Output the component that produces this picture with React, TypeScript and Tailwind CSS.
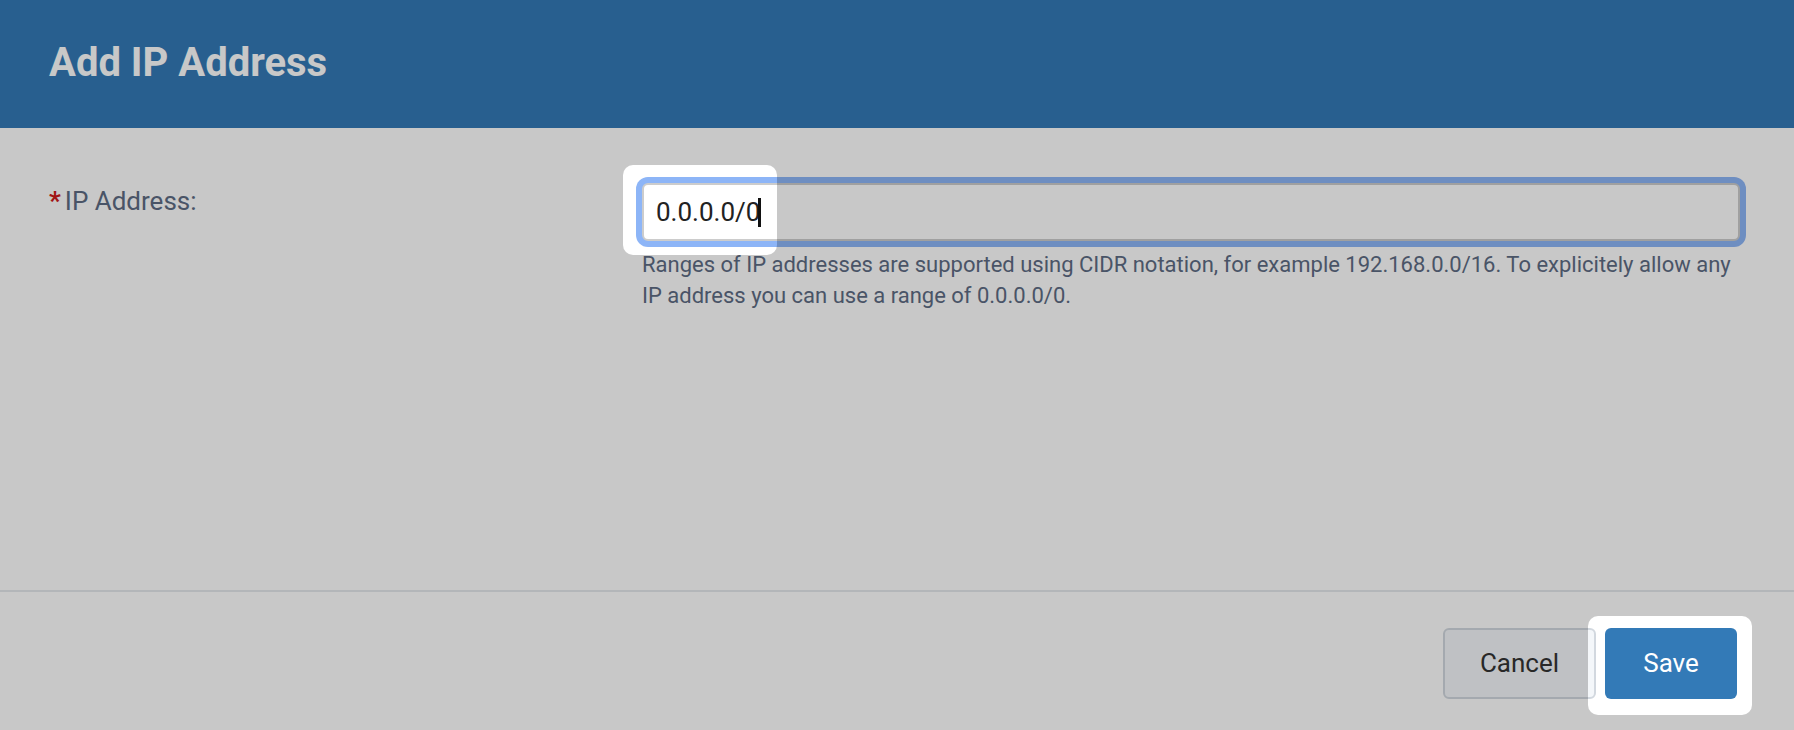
import React from "react";

export default function App() {
  return (
    <div className="relative w-[1794px] h-[730px] overflow-hidden bg-white font-['Roboto',sans-serif]">
      {/* Header */}
      <div className="h-[128px] bg-[#337ab7] pl-[49px] pt-[39px]">
        <h1 className="text-[40px] leading-[48px] font-bold text-white">Add IP Address</h1>
      </div>

      {/* Body */}
      <div className="h-[462px] flex pl-[49px] pt-[55px]">
        <div className="w-[593px] text-[26px] leading-[36px] text-[#5e6c84]">
          <span className="font-bold text-[#cf1c1c] mr-[4px]">*</span>IP Address:
        </div>
        <div className="w-[1098px]">
          <div className="h-[58px] border-2 border-[#cccccc] rounded-[6px] bg-white shadow-[0_0_0_6px_#8db5f7] flex items-center pl-[12px]">
            <span className="text-[26px] leading-[36px] text-[#222222]">0.0.0.0/0</span>
            <span className="inline-block w-[3px] h-[29px] bg-[#111111] -ml-[2px]" />
          </div>
          <p className="mt-[8px] text-[22px] leading-[31px] text-[#5e6c84] whitespace-nowrap">
            Ranges of IP addresses are supported using CIDR notation, for example 192.168.0.0/16. To explicitely allow any
            <br />
            IP address you can use a range of 0.0.0.0/0.
          </p>
        </div>
      </div>

      {/* Footer */}
      <div className="border-t-2 border-[#e4e8ec] pt-[36px] pr-[57px] flex justify-end gap-[9px]">
        <button className="w-[153px] h-[71px] rounded-[6px] border-2 border-[#d2d8df] bg-[#f4f7fa] text-[26px] text-[#333333]">
          Cancel
        </button>
        <button className="w-[132px] h-[71px] rounded-[6px] bg-[#337ab7] text-[26px] text-white">
          Save
        </button>
      </div>

      {/* Spotlight overlay */}
      <svg className="absolute inset-0 pointer-events-none" width="1794" height="730">
        <defs>
          <mask id="spot">
            <rect x="0" y="0" width="1794" height="730" fill="white" />
            <rect x="623" y="165" width="154" height="90" rx="10" fill="black" />
            <rect x="1588" y="616" width="164" height="99" rx="10" fill="black" />
          </mask>
        </defs>
        <rect x="0" y="0" width="1794" height="730" fill="rgba(0,0,0,0.215)" mask="url(#spot)" />
      </svg>
    </div>
  );
}
